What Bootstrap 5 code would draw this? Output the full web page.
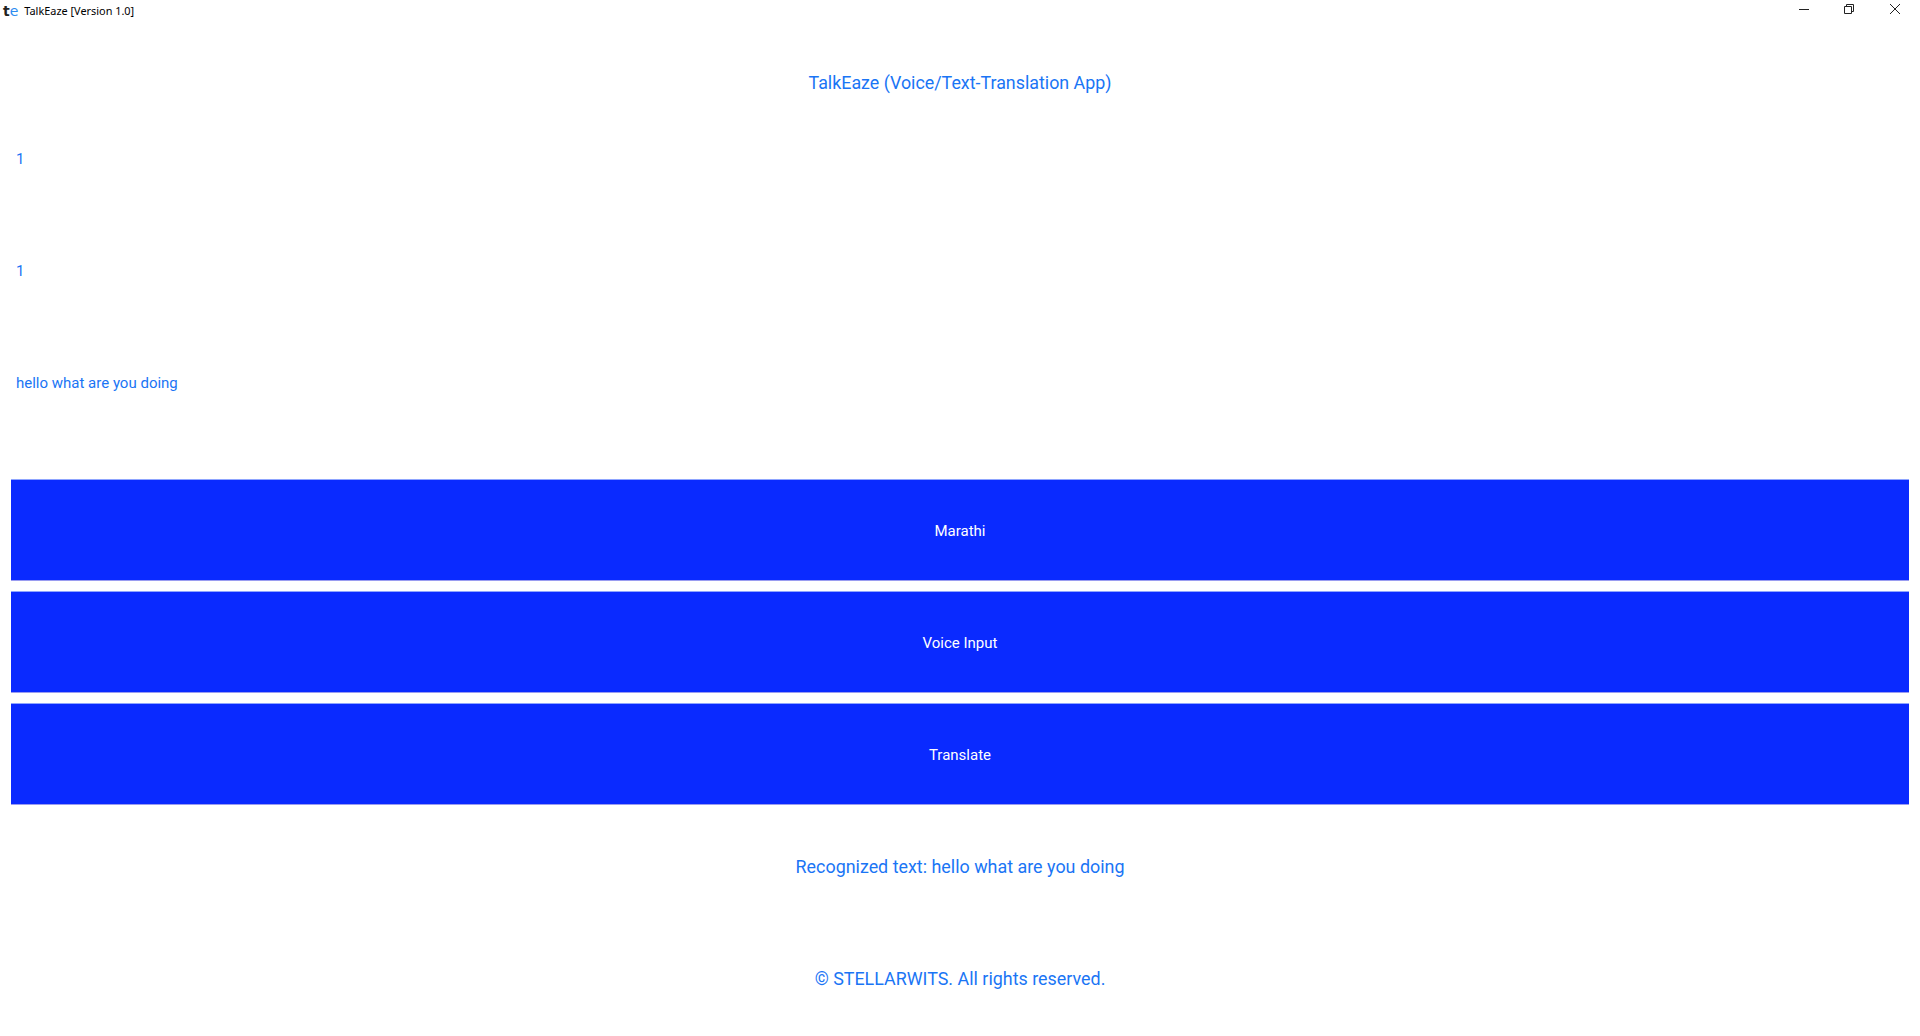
<!DOCTYPE html>
<html><head><meta charset="utf-8">
<link href="https://cdn.jsdelivr.net/npm/bootstrap@5.3.0/dist/css/bootstrap.min.css" rel="stylesheet">
<style>
html,body{height:100%;background:#fff;font-family:Roboto,sans-serif;color:#1a75f5;overflow:hidden}
.app-title{height:21px;font-size:10.9px;font-family:"Noto Sans",sans-serif;color:#000;padding-left:3px}
.title-text{padding-top:2px}
.logo-t{font:bold 14px "DejaVu Sans",sans-serif;color:#222;line-height:1}
.logo-e{font:14px "DejaVu Sans",sans-serif;color:#2d8cf0;line-height:1;margin-right:6px}
.win-group{align-self:flex-start;padding-right:2.5px}
.win-btn{width:45.5px;height:18px;display:flex;align-items:center;justify-content:center}
.win-btn svg{display:block}
.app-body{padding:0 11px}
.title-row{height:81px;padding-top:50px;line-height:24px;font-size:17.85px;text-align:center}
.lbl{height:112px;font-size:15px;padding:2px 0 0 5px}
.lbl-last{margin-bottom:42px}
.foot-row{height:112px;font-size:17.9px;padding-top:2px}
.foot-first{margin-top:6px}
.blue-btn,.blue-btn:hover{background:#0a2aff;color:#fff;height:100px;border:0;border-radius:0;font-size:15px;padding-top:8px;margin-bottom:12px;box-shadow:0 -1px 0 #8fa5ff,0 1px 0 #9a9cf0}
.blue-btn.end{margin-bottom:0}
</style></head><body>
<div class="app-title d-flex align-items-center"><span class="logo-t">t</span><span class="logo-e">e</span><span class="title-text">TalkEaze [Version 1.0]</span>
<div class="win-group ms-auto d-flex">
<div class="win-btn"><svg width="10" height="10" viewBox="0 0 10 10"><path d="M0 5.5h10" stroke="#222" stroke-width="1"/></svg></div>
<div class="win-btn"><svg width="10" height="10" viewBox="0 0 10 10" fill="none" stroke="#222"><path d="M.5 2.5h7v7h-7z M2.5 2.5v-2h7v7h-2"/></svg></div>
<div class="win-btn"><svg width="10" height="10" viewBox="0 0 10 10"><path d="M0 0l10 10M10 0L0 10" stroke="#222" stroke-width="1"/></svg></div>
</div></div>
<div class="app-body">
<div class="title-row">TalkEaze (Voice/Text-Translation App)</div>
<div class="lbl d-flex align-items-center">1</div>
<div class="lbl d-flex align-items-center">1</div>
<div class="lbl lbl-last d-flex align-items-center">hello what are you doing</div>
<button class="btn blue-btn w-100 d-block">Marathi</button>
<button class="btn blue-btn w-100 d-block">Voice Input</button>
<button class="btn blue-btn end w-100 d-block">Translate</button>
<div class="foot-row foot-first d-flex align-items-center justify-content-center">Recognized text: hello what are you doing</div>
<div class="foot-row d-flex align-items-center justify-content-center">© STELLARWITS. All rights reserved.</div>
</div>
</body></html>
